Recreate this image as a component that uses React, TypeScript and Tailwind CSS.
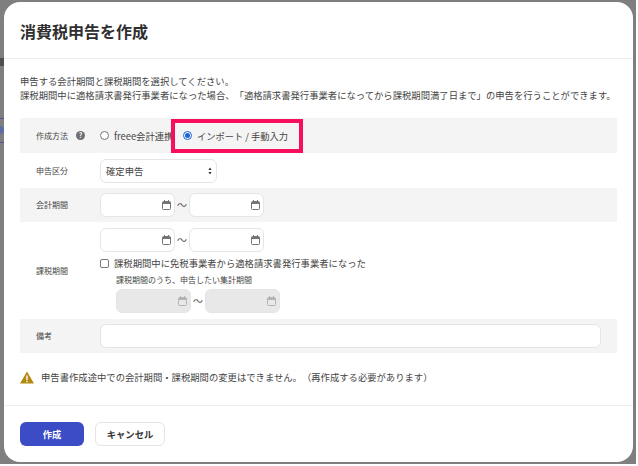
const font = { fontFamily: '"Noto Sans CJK JP", sans-serif' };

const Calendar = ({ disabled }: { disabled?: boolean }) => (
  <svg width="9" height="10" viewBox="0 0 9 10" className="shrink-0">
    <g fill="none" stroke={disabled ? "#b4b4b4" : "#757575"} strokeWidth="1">
      <rect x="0.5" y="1.5" width="8" height="8" rx="1" />
      <path d="M2.5 0v2M6.5 0v2" />
    </g>
    <rect x="0.5" y="2" width="8" height="2" fill={disabled ? "#b4b4b4" : "#757575"} />
  </svg>
);

const DateInput = ({ disabled }: { disabled?: boolean }) => (
  <div
    className={`flex h-6 w-[75px] items-center justify-end rounded-md border border-[#e6e5e4] pr-[3px] ${
      disabled ? "bg-[#e8e8e8]" : "bg-white"
    }`}
  >
    <Calendar disabled={disabled} />
  </div>
);

const DateRange = ({ disabled }: { disabled?: boolean }) => (
  <div className="flex items-center">
    <DateInput disabled={disabled} />
    <span className="w-[14px] text-center text-[10px] leading-none text-[#555]">〜</span>
    <DateInput disabled={disabled} />
  </div>
);

const Row = ({
  label,
  shaded,
  className,
  children,
}: {
  label: React.ReactNode;
  shaded?: boolean;
  className?: string;
  children: React.ReactNode;
}) => (
  <div className={`flex items-center ${shaded ? "bg-[#f5f4f4]" : ""} ${className ?? ""}`}>
    <div className="flex w-[80px] shrink-0 items-center pl-4 text-[8px] text-[#444]">{label}</div>
    <div className="min-w-0 flex-1">{children}</div>
  </div>
);

export default function App() {
  return (
    <div className="relative h-[466px] w-[638px] overflow-hidden bg-white" style={font}>
      <div className="relative h-[464px] w-[636px] bg-[#7f7f7f] pl-1 pr-[3px] pt-[2px]">
        {/* page behind the modal, only a sliver shows */}
        <div className="absolute left-0 top-[118px] h-px w-1 bg-[#4a55a8]" />
        <div className="absolute left-0 top-[142px] h-px w-1 bg-[#4a55a8]" />
        <div className="absolute left-0 top-[126px] h-2 w-1 rounded-r-full bg-[#5a6fa8]" />
        <div className="absolute left-0 top-[58px] h-2 w-1 bg-[#4f4f4f]" />

        <div className="relative flex h-[460px] flex-col rounded-2xl bg-white text-[#333] [text-spacing-trim:space-all]">
          {/* Header */}
          <div className="flex h-[57px] shrink-0 items-center border-b border-[#eeeeee] pl-4 pt-[1px]">
            <h1 className="text-base font-bold text-[#2f2f2f]">消費税申告を作成</h1>
          </div>

          {/* Body */}
          <div className="flex-1 px-4 pt-[15px]">
            <p className="whitespace-nowrap text-[9.33px] leading-[14px] text-[#444]">
              申告する会計期間と課税期間を選択してください。
              <br />
              課税期間中に適格請求書発行事業者になった場合、「適格請求書発行事業者になってから課税期間満了日まで」の申告を行うことができます。
            </p>

            <div className="mt-[16px]">
              <Row
                shaded
                className="h-[35px]"
                label={
                  <>
                    作成方法
                    <span className="ml-2 flex h-[9px] w-[9px] items-center justify-center rounded-full bg-[#6f6f6f] text-[7px] font-bold leading-none text-white">
                      ?
                    </span>
                  </>
                }
              >
                <div className="flex items-center text-[9.33px] leading-[14px] text-[#444]">
                  <span className="h-[9px] w-[9px] rounded-full border border-[#777] bg-white" />
                  <span className="ml-[5px] w-[58px] whitespace-nowrap">freee会計連携</span>
                  <span className="relative ml-[11px] flex items-center">
                    {/* highlight annotation */}
                    <span className="absolute left-[-12px] top-[-10px] h-[34px] w-[132px] border-4 border-[#f80f5c] bg-[#f5f4f4]" />
                    <span className="relative flex h-[9px] w-[9px] items-center justify-center rounded-full border border-[#1a62d6] bg-white">
                      <span className="h-[5px] w-[5px] rounded-full bg-[#1a62d6]" />
                    </span>
                    <span className="relative ml-[5px] whitespace-nowrap text-[9.25px]">インポート / 手動入力</span>
                  </span>
                </div>
              </Row>

              <Row label="申告区分" className="h-[35px]">
                <div className="flex h-6 w-[117px] items-center justify-between rounded-md border border-[#e6e5e4] bg-white pl-[5px] pr-1 text-[9.33px] text-[#444]">
                  確定申告
                  <svg width="4" height="8" viewBox="0 0 4 8">
                    <path d="M2 0.5L3.6 3H0.4zM2 7.5L0.4 5h3.2z" fill="#333" />
                  </svg>
                </div>
              </Row>

              <Row shaded label="会計期間" className="h-[34px]">
                <DateRange />
              </Row>

              <Row label="課税期間" className="h-[97px]">
                <DateRange />
                <div className="mt-1 flex items-center text-[9.33px] leading-[14px] text-[#444]">
                  <span className="h-[9px] w-[9px] rounded-[2px] border border-[#777] bg-white" />
                  <span className="ml-[5px]">課税期間中に免税事業者から適格請求書発行事業者になった</span>
                </div>
                <div className="ml-4 mt-[3px] text-[8px] leading-[14px] text-[#444]">課税期間のうち、申告したい集計期間</div>
                <div className="ml-4 mt-[2px]">
                  <DateRange disabled />
                </div>
              </Row>

              <Row shaded label="備考" className="h-[34px]">
                <div className="mr-[16px] h-6 rounded-md border border-[#e6e5e4] bg-white" />
              </Row>
            </div>

            {/* Warning */}
            <div className="mt-[17px] flex items-center text-[9.33px] leading-[14px] text-[#444]">
              <svg width="14" height="13" viewBox="0 0 14 13" className="shrink-0">
                <path d="M7 0.5L14 12.5H0z" fill="#b38a10" />
                <rect x="6.3" y="4.5" width="1.4" height="4.5" fill="#fff" />
                <rect x="6.3" y="9.8" width="1.4" height="1.4" fill="#fff" />
              </svg>
              <span className="ml-[7px] whitespace-nowrap">申告書作成途中での会計期間・課税期間の変更はできません。（再作成する必要があります）</span>
            </div>
          </div>

          {/* Footer */}
          <div className="flex h-[57px] shrink-0 items-center gap-[11px] border-t border-[#eeeeee] pl-4">
            <button className="h-6 w-16 rounded-md bg-[#3b4cc6] text-[9.33px] font-bold text-white">作成</button>
            <button className="h-6 w-[70px] rounded-md border border-[#e6e5e4] bg-white text-[9.33px] font-bold text-[#333]">キャンセル</button>
          </div>
        </div>
      </div>
    </div>
  );
}
